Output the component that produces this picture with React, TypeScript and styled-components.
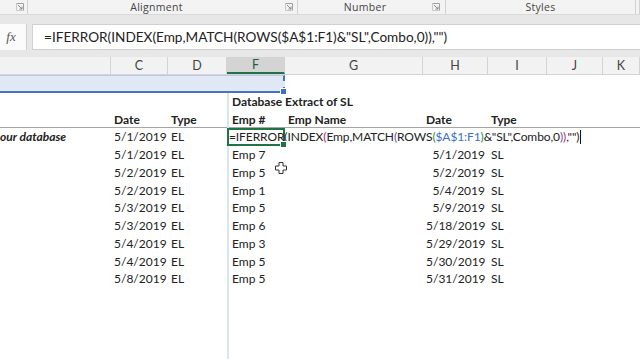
import styled, { createGlobalStyle } from "styled-components";

const GlobalStyle = createGlobalStyle`
  html, body {
    margin: 0;
    padding: 0;
    background: #ffffff;
    overflow: hidden;
  }
  body {
    font-family: Lato, "Liberation Sans", sans-serif;
  }
`;

const COLS = "111px 57px 59px 58px 138px 65px 59px 56px 1fr";

const Screen = styled.div`
  position: relative;
  width: 640px;
  height: 360px;
  overflow: hidden;
  background: #ffffff;
`;

const Ribbon = styled.div`
  display: flex;
  height: 14px;
  background: #f3f3f3;
  border-bottom: 1px solid #d9d9d9;
`;

const Group = styled.div<{ $width: string; $pad: number }>`
  display: flex;
  align-items: center;
  width: ${(p) => p.$width};
  flex: ${(p) => (p.$width === "auto" ? 1 : "none")};
  padding-right: ${(p) => p.$pad}px;
  box-sizing: border-box;
  border-right: 1px solid #d2d2d2;
`;

const GroupLabel = styled.div`
  flex: 1;
  text-align: center;
  font-size: 10.5px;
  line-height: 14px;
  color: #444444;
  font-family: "Open Sans", Lato, sans-serif;
  letter-spacing: 0.3px;
`;

const Launcher = styled.svg`
  width: 8px;
  height: 8px;
  flex: none;
`;

const FormulaArea = styled.div`
  background: #e7e7e7;
  padding: 9px 0 7px 0;
`;

const FormulaRow = styled.div`
  display: flex;
  height: 26px;
  gap: 5px;
`;

const FxBox = styled.div`
  width: 27px;
  background: #fbfbfb;
  border-right: 1px solid #d0d0d0;
  display: flex;
  align-items: center;
  justify-content: center;
  font-family: "Liberation Serif", serif;
  font-style: italic;
  font-size: 13px;
  color: #555555;
  box-sizing: border-box;
  padding-right: 4px;
`;

const FormulaInput = styled.div`
  flex: 1;
  background: #ffffff;
  border: 1px solid #d0d0d0;
  border-right: none;
  display: flex;
  align-items: center;
  padding-left: 11px;
  font-size: 13.6px;
  color: #222222;
  white-space: nowrap;
  overflow: hidden;
`;

const HeaderRow = styled.div`
  display: grid;
  grid-template-columns: ${COLS};
  height: 18px;
  background: #f2f2f2;
  border-bottom: 1px solid #d4d4d4;
  box-sizing: border-box;
`;

const ColHead = styled.div<{ $selected?: boolean }>`
  display: flex;
  align-items: center;
  justify-content: center;
  font-size: 12.5px;
  color: ${(p) => (p.$selected ? "#2d5a3d" : "#444444")};
  background: ${(p) => (p.$selected ? "#d4d4d4" : "transparent")};
  border-right: 1px solid #d3d3d3;
  border-bottom: ${(p) => (p.$selected ? "2px solid #217346" : "none")};
  box-sizing: border-box;
`;

const Sheet = styled.div`
  background: #ffffff;
`;

const Row = styled.div<{ $underline?: boolean }>`
  display: grid;
  grid-template-columns: ${COLS};
  height: 17.75px;
  box-sizing: border-box;
  border-bottom: ${(p) => (p.$underline ? "1px solid #a6a6a6" : "none")};
`;

const Cell = styled.div<{
  $align?: "left" | "right";
  $bold?: boolean;
  $italic?: boolean;
  $fcol?: boolean;
  $flush?: boolean;
}>`
  font-size: 12px;
  line-height: 17.75px;
  color: #222222;
  white-space: nowrap;
  overflow: visible;
  text-align: ${(p) => p.$align || "left"};
  padding: 0 3px 0 ${(p) => (p.$flush ? 0 : 3)}px;
  font-weight: ${(p) => (p.$bold ? 700 : 400)};
  font-style: ${(p) => (p.$italic ? "italic" : "normal")};
  border-left: ${(p) => (p.$fcol ? "2px solid #dbe5f0" : "none")};
  box-sizing: border-box;
  position: relative;
  z-index: ${(p) => (p.$fcol ? 1 : 0)};
`;

const RangeBox = styled.div`
  grid-column: 1 / 5;
  background: #e1e8f5;
  border-top: 1px solid #b8c8e6;
  border-bottom: 2px solid #4a72c2;
  border-right: 2px dashed #4a72c2;
  box-sizing: border-box;
  position: relative;
`;

const Handle = styled.span<{ $color: string }>`
  position: absolute;
  right: -4px;
  bottom: -4px;
  width: 5px;
  height: 5px;
  background: ${(p) => p.$color};
  border: 1px solid #ffffff;
`;

const EditCell = styled.div`
  position: relative;
  z-index: 2;
  border: 2px solid #217346;
  box-sizing: border-box;
  font-size: 12px;
  line-height: 14px;
  white-space: nowrap;
  overflow: visible;
  color: #222222;
  letter-spacing: -0.1px;
`;

const Token = styled.span<{ $color: string }>`
  color: ${(p) => p.$color};
`;

const Caret = styled.span`
  display: inline-block;
  width: 1px;
  height: 14px;
  background: #111111;
  vertical-align: top;
  margin-left: 1px;
`;

const Pointer = styled.svg`
  position: absolute;
  left: 275px;
  top: 162px;
  width: 12px;
  height: 12px;
`;

const BLACK = "#222222";
const PINK = "#c2185b";
const PURPLE = "#7b3fa0";
const GREEN = "#2e8b3e";
const BLUE = "#3d6fc9";

const FORMULA = '=IFERROR(INDEX(Emp,MATCH(ROWS($A$1:F1)&"SL",Combo,0)),"")';

const tokens: [string, string][] = [
  ["=IFERROR(INDEX", BLACK],
  ["(", PINK],
  ["Emp,MATCH", BLACK],
  ["(", PURPLE],
  ["ROWS", BLACK],
  ["(", GREEN],
  ["$A$1:F1", BLUE],
  [")", GREEN],
  ['&"SL",Combo,0', BLACK],
  [")", PURPLE],
  [")", PINK],
  [',""', BLACK],
  [")", BLACK],
];

const left = [
  "5/1/2019",
  "5/2/2019",
  "5/2/2019",
  "5/3/2019",
  "5/3/2019",
  "5/4/2019",
  "5/4/2019",
  "5/8/2019",
];
const emps = ["Emp 7", "Emp 5", "Emp 1", "Emp 5", "Emp 6", "Emp 3", "Emp 5", "Emp 5"];
const right = [
  "5/1/2019",
  "5/2/2019",
  "5/4/2019",
  "5/9/2019",
  "5/18/2019",
  "5/29/2019",
  "5/30/2019",
  "5/31/2019",
];

const LauncherIcon = () => (
  <Launcher viewBox="0 0 8 8">
    <path d="M0.5 0.5 H7.5 V7.5" fill="none" stroke="#a0a0a0" strokeWidth="1" />
    <path d="M0.5 0.5 V7.5 H7.5" fill="none" stroke="#c8c8c8" strokeWidth="1" />
    <path d="M2 2 L6 6 M6 3.5 V6 H3.5" fill="none" stroke="#8a8a8a" strokeWidth="1" />
  </Launcher>
);

export default function App() {
  return (
    <Screen>
      <GlobalStyle />
      <Ribbon>
        <Group $width="28px" $pad={3}>
          <GroupLabel />
          <LauncherIcon />
        </Group>
        <Group $width="270px" $pad={4}>
          <GroupLabel>Alignment</GroupLabel>
          <LauncherIcon />
        </Group>
        <Group $width="148px" $pad={5}>
          <GroupLabel>Number</GroupLabel>
          <LauncherIcon />
        </Group>
        <Group $width="190px" $pad={0}>
          <GroupLabel>Styles</GroupLabel>
        </Group>
        <Group $width="auto" $pad={0} />
      </Ribbon>

      <FormulaArea>
        <FormulaRow>
          <FxBox>fx</FxBox>
          <FormulaInput>{FORMULA}</FormulaInput>
        </FormulaRow>
      </FormulaArea>

      <HeaderRow>
        <ColHead />
        <ColHead>C</ColHead>
        <ColHead>D</ColHead>
        <ColHead $selected>F</ColHead>
        <ColHead>G</ColHead>
        <ColHead>H</ColHead>
        <ColHead>I</ColHead>
        <ColHead>J</ColHead>
        <ColHead>K</ColHead>
      </HeaderRow>

      <Sheet>
        <Row>
          <RangeBox>
            <Handle $color="#3d6fc9" />
          </RangeBox>
        </Row>
        <Row>
          <Cell />
          <Cell />
          <Cell />
          <Cell $fcol $bold>
            Database Extract of SL
          </Cell>
        </Row>
        <Row $underline>
          <Cell />
          <Cell $bold>Date</Cell>
          <Cell $bold>Type</Cell>
          <Cell $fcol $bold>
            Emp #
          </Cell>
          <Cell $bold>Emp Name</Cell>
          <Cell $bold>Date</Cell>
          <Cell $bold>Type</Cell>
        </Row>
        <Row>
          <Cell $bold $italic $flush>
            our database
          </Cell>
          <Cell $align="right">5/1/2019</Cell>
          <Cell>EL</Cell>
          <EditCell>
            {tokens.map(([t, c], i) => (
              <Token key={i} $color={c}>
                {t}
              </Token>
            ))}
            <Caret />
            <Handle $color="#217346" />
          </EditCell>
        </Row>
        {left.map((d, i) => (
          <Row key={i}>
            <Cell />
            <Cell $align="right">{d}</Cell>
            <Cell>EL</Cell>
            <Cell $fcol>{emps[i]}</Cell>
            <Cell />
            <Cell $align="right">{right[i]}</Cell>
            <Cell>SL</Cell>
          </Row>
        ))}
        {[0, 1, 2, 3].map((i) => (
          <Row key={`e${i}`}>
            <Cell />
            <Cell />
            <Cell />
            <Cell $fcol />
          </Row>
        ))}
      </Sheet>

      <Pointer viewBox="0 0 12 12">
        <path
          d="M4 0.5 H8 V4 H11.5 V8 H8 V11.5 H4 V8 H0.5 V4 H4 Z"
          fill="#ffffff"
          stroke="#333333"
          strokeWidth="1"
        />
      </Pointer>
    </Screen>
  );
}
